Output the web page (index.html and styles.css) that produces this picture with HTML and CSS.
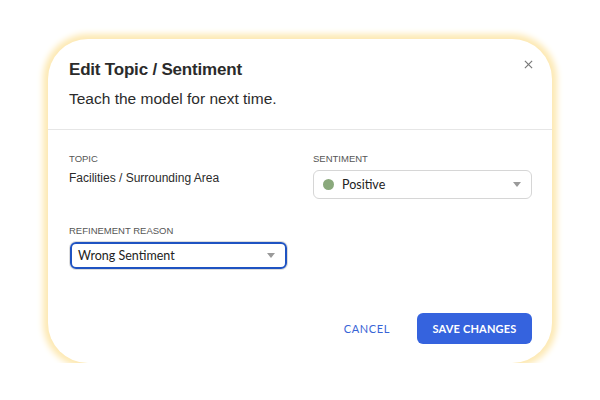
FILE: index.html
```html
<!DOCTYPE html>
<html lang="en">
<head>
  <meta charset="UTF-8" />
  <meta name="viewport" content="width=device-width, initial-scale=1.0"/>
  <title>Edit Topic / Sentiment</title>
  <link rel="stylesheet" href="styles.css">
</head>
<body>

<div class="dialog">
  <button class="close" aria-label="Close">
    <svg viewBox="0 0 10 10" width="9" height="9">
      <line x1="1" y1="1" x2="9" y2="9" />
      <line x1="9" y1="1" x2="1" y2="9" />
    </svg>
  </button>

  <div class="dialog-head">
    <h1 class="title">Edit Topic / Sentiment</h1>
    <p class="subtitle">Teach the model for next time.</p>
  </div>

  <div class="dialog-body">
    <div class="field">
      <div class="label">Topic</div>
      <div class="value">Facilities / Surrounding Area</div>
    </div>
    <div class="field">
      <div class="label">Sentiment</div>
      <div class="select">
        <span class="dot"></span>
        <span class="select-text">Positive</span>
        <span class="caret"></span>
      </div>
    </div>
    <div class="field">
      <div class="label">Refinement Reason</div>
      <div class="select focused">
        <span class="select-text">Wrong Sentiment</span>
        <span class="caret"></span>
      </div>
    </div>
  </div>

  <div class="dialog-foot">
    <button class="btn btn-text">Cancel</button>
    <button class="btn btn-primary">Save Changes</button>
  </div>
</div>

</body>
</html>
```

FILE: styles.css
```css
body {
  margin: 0;
  padding: 39px 0 0 48px;
  background: #fff;
  font-family: "Liberation Sans", Arial, sans-serif;
  color: #2b2b2b;
}

.dialog {
  position: relative;
  width: 504px;
  height: 324px;
  box-sizing: border-box;
  background: #fff;
  border-radius: 40px;
  box-shadow: 0 0 6px 5px #fde9b3;
  display: flex;
  flex-direction: column;
}

.close {
  position: absolute;
  top: 19px;
  right: 18px;
  width: 12px;
  height: 12px;
  padding: 0;
  border: 0;
  background: none;
  display: flex;
  align-items: center;
  justify-content: center;
}

.close line {
  stroke: #777;
  stroke-width: 1.3;
}

.dialog-head {
  padding: 20px 21px 21px;
  border-bottom: 1px solid #e6e6e6;
}

.title {
  margin: 0;
  font-size: 17px;
  line-height: 22px;
  font-weight: 700;
  letter-spacing: -0.2px;
  color: #2b2b2b;
}

.subtitle {
  margin: 9px 0 0;
  font-size: 15.5px;
  line-height: 18px;
  color: #2b2b2b;
}

.dialog-body {
  display: grid;
  grid-template-columns: 219px 219px;
  column-gap: 25px;
  row-gap: 26px;
  padding: 23px 21px 0 21px;
}

.label {
  font-size: 9.5px;
  line-height: 12px;
  text-transform: uppercase;
  color: #555;
  margin-bottom: 5px;
}

.value {
  font-size: 12px;
  line-height: 16px;
  color: #2b2b2b;
}

.select {
  height: 29px;
  box-sizing: border-box;
  border: 1px solid #d6d6d6;
  border-radius: 6px;
  display: flex;
  align-items: center;
  padding: 0 10px 0 9px;
  font-family: Lato, "Liberation Sans", sans-serif;
  font-size: 12.5px;
  color: #222;
}

.select.focused {
  width: 217px;
  height: 27px;
  margin-left: 1px;
  border: 2px solid #1f53c2;
  box-shadow: 0 0 0 1px #dcdcdc;
  padding-left: 6px;
}

.dot {
  width: 11px;
  height: 11px;
  border-radius: 50%;
  background: #8aa97c;
  margin-right: 8px;
}

.select-text {
  flex: 1;
}

.caret {
  width: 0;
  height: 0;
  border-left: 4px solid transparent;
  border-right: 4px solid transparent;
  border-top: 5px solid #9a9a9a;
}

.dialog-foot {
  margin-top: auto;
  display: flex;
  justify-content: flex-end;
  align-items: center;
  gap: 27px;
  padding: 0 20px 19px;
}

.btn {
  font-family: Lato, "Liberation Sans", sans-serif;
  font-size: 11px;
  font-weight: 700;
  letter-spacing: 0.2px;
  text-transform: uppercase;
  border: 0;
  cursor: pointer;
}

.btn-text {
  background: none;
  color: #3864d6;
  font-weight: 400;
  letter-spacing: 0.6px;
  padding: 0;
}

.btn-primary {
  background: #3563de;
  color: #fff;
  height: 31px;
  width: 115px;
  border-radius: 6px;
  padding: 0;
}
```
